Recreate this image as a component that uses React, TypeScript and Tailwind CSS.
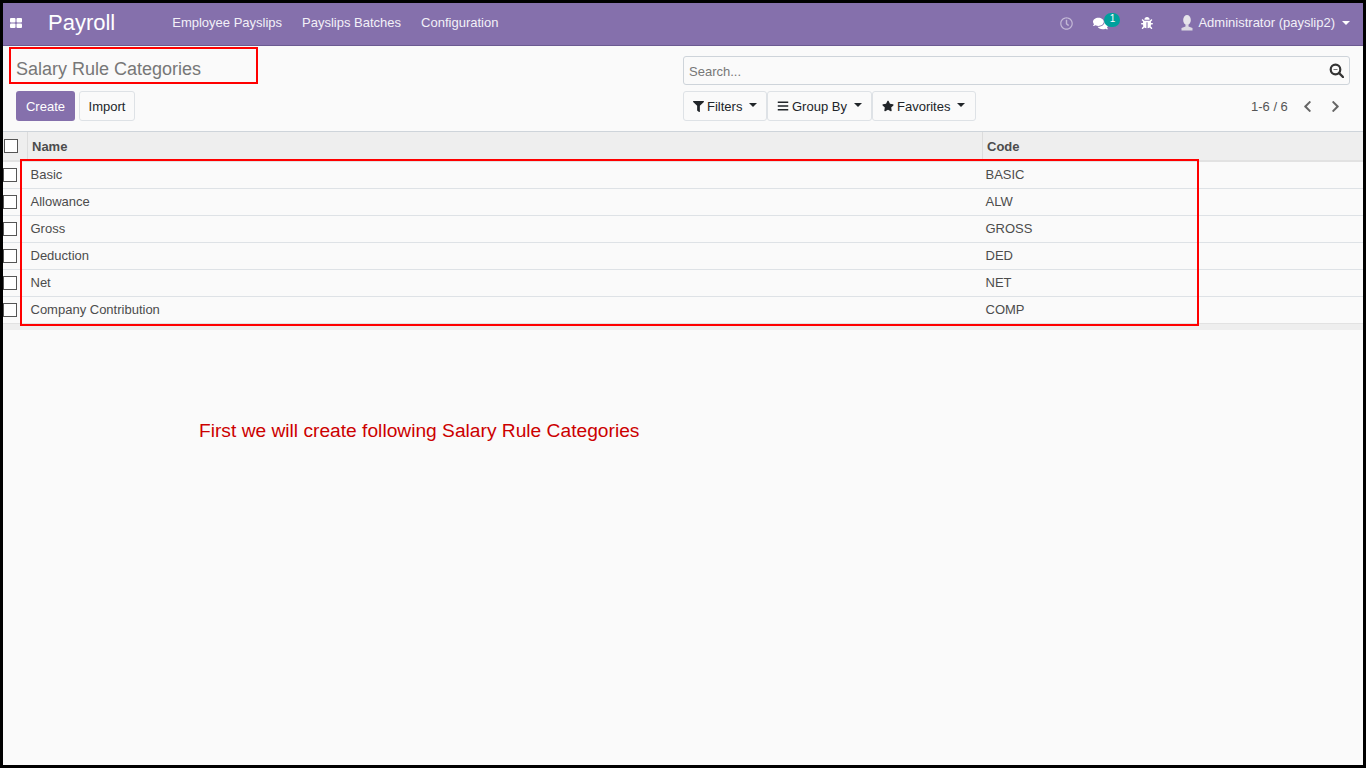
import { FaBars, FaBug, FaChevronLeft, FaChevronRight, FaComments, FaFilter, FaRegClock, FaStar } from "react-icons/fa";

const rows = [
  ["Basic", "BASIC"],
  ["Allowance", "ALW"],
  ["Gross", "GROSS"],
  ["Deduction", "DED"],
  ["Net", "NET"],
  ["Company Contribution", "COMP"],
];

function Caret() {
  return <span className="ml-[7px] mb-[2px] inline-block h-0 w-0 border-x-[4px] border-t-[4px] border-x-transparent border-t-[#212529]" />;
}

function Check() {
  return <span className="block h-[14px] w-[14px] border border-[#555] bg-white" />;
}

function Dropdown({ icon, label, width }: { icon: React.ReactNode; label: string; width: string }) {
  return (
    <div className={"flex h-[30px] items-center rounded-[3px] border border-[#dee2e6] pl-[9px] text-[13px] text-[#212529] " + width}>
      {icon}
      <span className="ml-[3px] pt-[2px]">{label}</span>
      <Caret />
    </div>
  );
}

export default function App() {
  return (
    <div className="relative flex h-[768px] w-[1366px] flex-col overflow-hidden border-[3px] border-black bg-[#fafafa] font-['Liberation_Sans',Arial,sans-serif] text-[13px] text-[#4c4c4c]">
      <header className="flex h-[43px] shrink-0 items-center border-b border-[#6b5a91] bg-[#8570ac] pb-[2px] text-white">
        <svg viewBox="0 0 12 10" className="ml-[7px] h-[10px] w-[12px]">
          <rect x="0" y="0" width="5.500" height="4.500" rx="1" fill="#fff" />
          <rect x="6.500" y="0" width="5.500" height="4.500" rx="1" fill="#fff" />
          <rect x="0" y="5.500" width="5.500" height="4.500" rx="1" fill="#fff" />
          <rect x="6.500" y="5.500" width="5.500" height="4.500" rx="1" fill="#fff" />
        </svg>
        <span className="ml-[26px] text-[22px] leading-none">Payroll</span>
        <nav className="ml-[57px] flex gap-[20px] text-[13px] text-[#f3f0f8]">
          <span>Employee Payslips</span>
          <span>Payslips Batches</span>
          <span>Configuration</span>
        </nav>
        <div className="ml-auto flex items-center">
          <FaRegClock className="h-[13px] w-[13px] text-[#c3b8d6]" />
          <div className="relative ml-[20px]">
            <FaComments className="h-[15px] w-[15px] text-white" />
            <span className="absolute left-[11px] top-[-3px] flex h-[14px] w-[16px] items-center justify-center rounded-full bg-[#00a09d] pb-[1px] text-[10px] leading-none text-white">1</span>
          </div>
          <FaBug className="ml-[33px] h-[12px] w-[12px] text-white" />
          <svg viewBox="0 0 12 16" className="ml-[28px] h-[16px] w-[12px]">
            <ellipse cx="6" cy="5" rx="3.800" ry="5" fill="#e6e4ea" />
            <path d="M4.500 9h3v2.500l4 1.500v2.500H.5V13l4-1.500z" fill="#dcd9e2" />
          </svg>
          <span className="ml-[5px] text-[13px] text-[#f3f0f8]">Administrator (payslip2)</span>
          <span className="ml-[7px] mr-[13px] h-0 w-0 border-x-[4px] border-t-[4px] border-x-transparent border-t-white" />
        </div>
      </header>

      <section className="flex h-[86px] shrink-0 border-b border-[#ced4da]">
        <div className="flex w-[680px] flex-col pl-[13px]">
          <h1 className="mt-[11px] text-[18px] leading-[24px] text-[#777]">Salary Rule Categories</h1>
          <div className="mt-[10px] flex gap-[4px]">
            <span className="flex h-[30px] w-[59px] items-center justify-center rounded-[3px] bg-[#8570ac] pt-[2px] text-white">Create</span>
            <span className="flex h-[30px] w-[56px] items-center justify-center rounded-[3px] border border-[#dee2e6] pt-[2px] text-[#212529]">Import</span>
          </div>
        </div>
        <div className="flex flex-1 flex-col">
          <div className="mt-[10px] flex h-[29px] w-[667px] items-center justify-between rounded-[3px] border border-[#ced4da] pl-[5px] pr-[5px]">
            <span className="pt-[2px] text-[13px] text-[#777]">Search...</span>
            <svg viewBox="0 0 15 15" className="h-[15px] w-[15px]">
              <circle cx="6.500" cy="6.500" r="4.800" fill="none" stroke="#333" strokeWidth="2.200" />
              <path d="M4.500 6.500h4" stroke="#777" strokeWidth="1" />
              <path d="M10 10l4 4" stroke="#333" strokeWidth="2.400" strokeLinecap="round" />
            </svg>
          </div>
          <div className="mt-[6px] flex items-center">
            <Dropdown icon={<FaFilter className="h-[11px] w-[11px] text-[#212529]" />} label="Filters" width="w-[84px]" />
            <Dropdown icon={<FaBars className="h-[12px] w-[12px] text-[#212529]" />} label="Group By" width="w-[105px]" />
            <Dropdown icon={<FaStar className="h-[12px] w-[12px] text-[#212529]" />} label="Favorites" width="w-[104px]" />
            <span className="ml-[275px] pt-[2px] text-[#555]">1-6 / 6</span>
            <FaChevronLeft className="ml-[13px] h-[13px] w-[13px] text-[#666]" />
            <FaChevronRight className="ml-[15px] h-[13px] w-[13px] text-[#666]" />
          </div>
        </div>
      </section>

      <div className="flex h-[30px] shrink-0 items-center border-b-[2px] border-[#e2e2e2] bg-[#eeeeee] font-bold text-[#4c4c4c]">
        <div className="flex h-full w-[25px] items-center border-r border-[#dcdcdc] pl-[1px]">
          <Check />
        </div>
        <div className="flex h-full w-[955px] items-center border-r border-[#dcdcdc] pl-[4px] pt-[2px]">Name</div>
        <div className="pl-[4px] pt-[2px]">Code</div>
      </div>

      <div className="shrink-0">
        {rows.map(([name, code]) => (
          <div key={code} className="flex h-[27px] items-center border-b border-[#dee2e6] last:h-[26px] last:border-b-0 text-[#4c4c4c]">
            <div className="w-[27.500px]">
              <Check />
            </div>
            <div className="w-[955px]">{name}</div>
            <div>{code}</div>
          </div>
        ))}
      </div>
      <div className="h-[7px] shrink-0 border-t border-[#e2e2e2] bg-[#eeeeee]" />

      <div className="absolute left-[6px] top-[44px] h-[37px] w-[249px] border-2 border-[#ff0000]" />
      <div className="absolute left-[17px] top-[156px] h-[167px] w-[1179px] border-2 border-[#ff0000]" />
      <div className="absolute left-[196px] top-[416px] text-[19.200px] leading-[24px] text-[#cc0000]">First we will create following Salary Rule Categories</div>
    </div>
  );
}
